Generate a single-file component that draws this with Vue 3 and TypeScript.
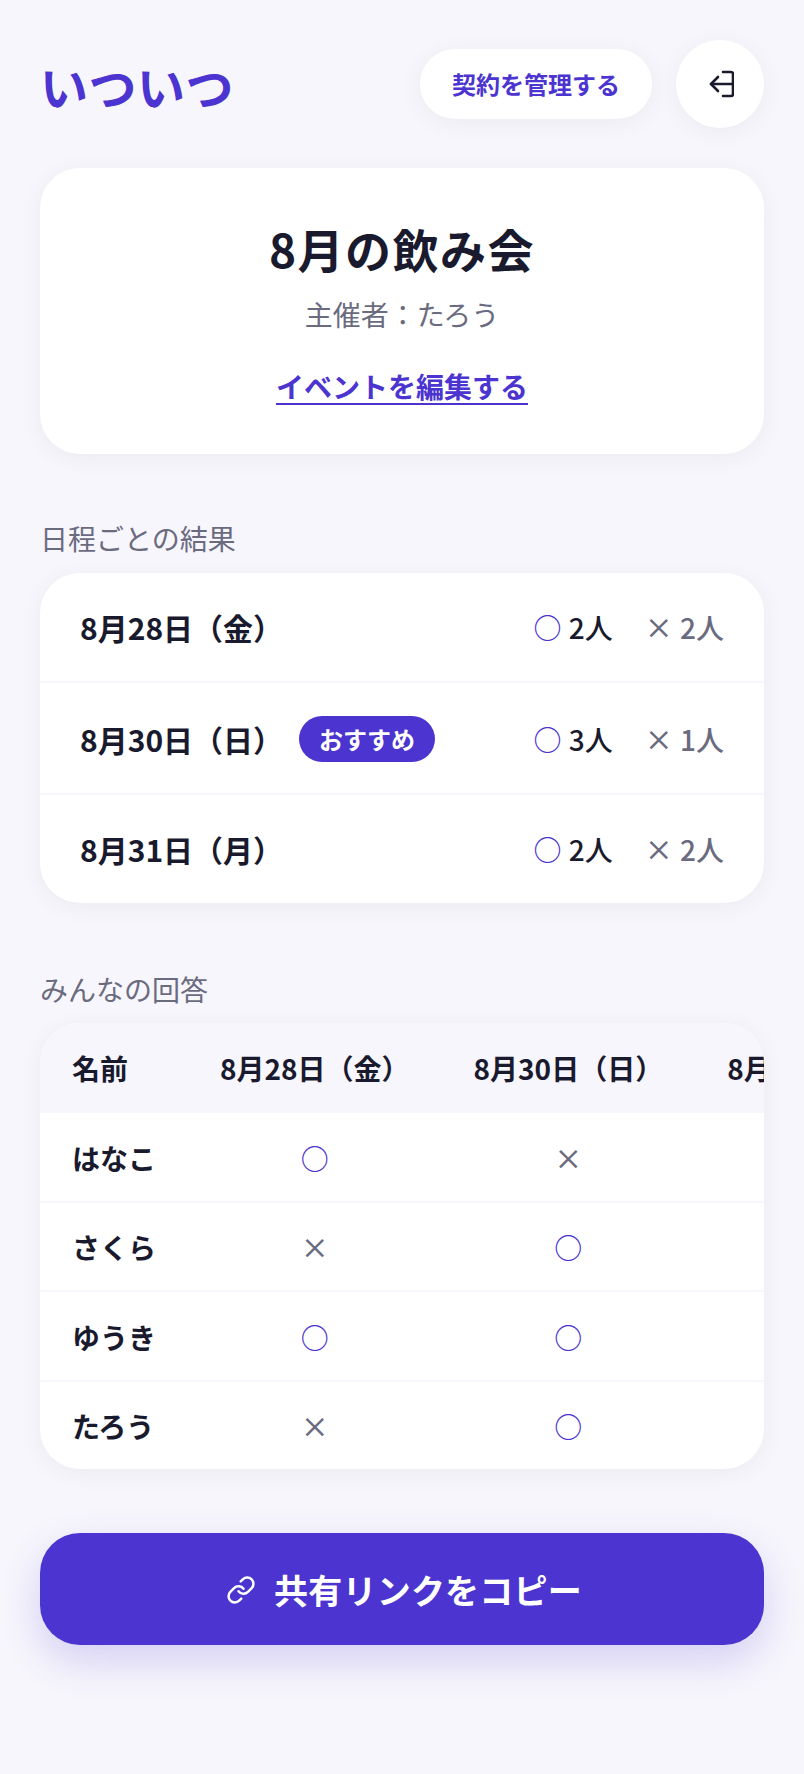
<script setup lang="ts">
type Mark = 'yes' | 'no'

interface DateSummary {
  label: string
  yes: number
  no: number
  recommended?: boolean
}

interface Answer {
  name: string
  marks: Mark[]
}

const summaries: DateSummary[] = [
  { label: '8月28日（金）', yes: 2, no: 2 },
  { label: '8月30日（日）', yes: 3, no: 1, recommended: true },
  { label: '8月31日（月）', yes: 2, no: 2 },
]

const answers: Answer[] = [
  { name: 'はなこ', marks: ['yes', 'no', 'yes'] },
  { name: 'さくら', marks: ['no', 'yes', 'no'] },
  { name: 'ゆうき', marks: ['yes', 'yes', 'no'] },
  { name: 'たろう', marks: ['no', 'yes', 'yes'] },
]
</script>

<template>
  <div class="page">
    <header class="top">
      <div class="logo">いついつ</div>
      <div class="top__actions">
        <button class="manage" type="button">契約を管理する</button>
        <button class="logout" type="button" aria-label="ログアウト">
          <svg width="28" height="28" viewBox="0 0 28 28" fill="none" stroke="#1a1a2e" stroke-width="2.6" stroke-linecap="round" stroke-linejoin="round">
            <path d="M17 2h8a2 2 0 0 1 2 2v20a2 2 0 0 1-2 2h-8" />
            <path d="M5 14h22" />
            <path d="M12 7l-7 7 7 7" />
          </svg>
        </button>
      </div>
    </header>

    <section class="card event">
      <h1 class="event__title">8月の飲み会</h1>
      <p class="event__host">主催者：たろう</p>
      <a class="event__edit" href="#">イベントを編集する</a>
    </section>

    <h2 class="label">日程ごとの結果</h2>
    <section class="card summary">
      <div v-for="row in summaries" :key="row.label" class="summary__row">
        <span class="summary__date">{{ row.label }}</span>
        <span v-if="row.recommended" class="badge">おすすめ</span>
        <span class="summary__counts">
          <span class="count"><span class="mark-yes count__mark">○</span> {{ row.yes }}人</span>
          <span class="count count--no"><span class="count__mark">×</span> {{ row.no }}人</span>
        </span>
      </div>
    </section>

    <h2 class="label label--answers">みんなの回答</h2>
    <section class="card answers">
      <table class="answers__table">
        <thead>
          <tr>
            <th class="answers__name">名前</th>
            <th v-for="row in summaries" :key="row.label">{{ row.label }}</th>
          </tr>
        </thead>
        <tbody>
          <tr v-for="answer in answers" :key="answer.name">
            <td class="answers__name">{{ answer.name }}</td>
            <td v-for="(mark, i) in answer.marks" :key="i" :class="mark === 'yes' ? 'mark-yes' : 'mark-no'">
              {{ mark === 'yes' ? '○' : '×' }}
            </td>
          </tr>
        </tbody>
      </table>
    </section>

    <button class="share" type="button">
      <svg width="30" height="30" viewBox="0 0 24 24" fill="none" stroke="#fff" stroke-width="2" stroke-linecap="round" stroke-linejoin="round">
        <path d="M10 13a5 5 0 0 0 7.54.54l3-3a5 5 0 0 0-7.07-7.07l-1.72 1.71" />
        <path d="M14 11a5 5 0 0 0-7.54-.54l-3 3a5 5 0 0 0 7.07 7.07l1.71-1.71" />
      </svg>
      <span>共有リンクをコピー</span>
    </button>
  </div>
</template>

<style>
html,
body {
  background: #f7f6fc;
}
</style>

<style scoped>
.page {
  box-sizing: border-box;
  min-height: 1774px;
  padding: 40px 40px 120px;
  background: #f7f6fc;
  color: #1a1a2e;
  font-family: "Noto Sans CJK JP", "Noto Sans", sans-serif;
  font-size: 28px;
  line-height: 1.6;
}

.top {
  display: flex;
  align-items: center;
  justify-content: space-between;
}

.top__actions {
  display: flex;
  align-items: center;
  gap: 24px;
}

.logo {
  padding-top: 4px;
  color: #4b34d0;
  font-size: 48px;
  font-weight: 700;
  letter-spacing: 0.5px;
  line-height: 1.2;
}

.manage {
  padding: 16px 32px;
  border: 0;
  border-radius: 999px;
  background: #ffffff;
  box-shadow: 0 4px 24px rgba(26, 26, 46, 0.05);
  color: #4b34d0;
  font: inherit;
  font-size: 24px;
  font-weight: 700;
}

.logout {
  display: flex;
  align-items: center;
  justify-content: center;
  width: 88px;
  height: 88px;
  padding: 0;
  border: 0;
  border-radius: 50%;
  background: #ffffff;
  box-shadow: 0 4px 24px rgba(26, 26, 46, 0.05);
}

.card {
  border-radius: 40px;
  background: #ffffff;
  box-shadow: 0 4px 24px rgba(26, 26, 46, 0.05);
}

.event {
  display: flex;
  flex-direction: column;
  align-items: center;
  margin-top: 40px;
  padding: 49px 40px 45px;
}

.event__title {
  margin: 0;
  font-size: 46px;
  font-weight: 700;
  letter-spacing: 1.5px;
  line-height: 62px;
}

.event__host {
  margin: 13px 0 0;
  color: #6b6b80;
  font-size: 28px;
}

.event__edit {
  margin-top: 27px;
  color: #4b34d0;
  font-size: 28px;
  font-weight: 700;
  text-decoration: underline;
  text-decoration-thickness: 2px;
  text-underline-offset: 5px;
}

.label {
  margin: 62px 0 13px;
  color: #6b6b80;
  font-size: 28px;
  font-weight: 400;
  line-height: 1.6;
}

.label--answers {
  margin: 64px 0 11px;
}

.summary__row {
  display: flex;
  align-items: center;
  padding: 30px 40px;
  border-bottom: 2px solid #f7f6fc;
}

.summary__row:nth-child(2) {
  padding: 31px 40px 29px;
}

.summary__row:last-child {
  border-bottom: 0;
}

.summary__date {
  font-size: 30px;
  font-weight: 700;
}

.badge {
  margin: 2px 0 2px 16px;
  padding: 4px 20px;
  border-radius: 999px;
  background: #4b34d0;
  color: #ffffff;
  font-size: 24px;
  font-weight: 700;
  line-height: 38px;
}

.summary__counts {
  display: flex;
  gap: 32px;
  margin-left: auto;
  font-weight: 500;
}

.count__mark {
  margin-right: 1px;
}

.count--no {
  color: #6b6b80;
}

.mark-yes {
  color: #4b34d0;
}

.mark-no {
  color: #6b6b80;
}

.answers {
  overflow: hidden;
}

.answers__table {
  border-collapse: collapse;
  white-space: nowrap;
}

.answers__table th,
.answers__table td {
  padding: 22.5px 32px 20px;
  text-align: center;
  font-size: 28px;
  font-weight: 500;
  line-height: 45px;
}

.answers__table th {
  padding-top: 23px;
  padding-bottom: 22px;
  background: #f7f6fc;
  font-weight: 700;
}

.answers__table tbody tr {
  border-bottom: 2px solid #f7f6fc;
}

.answers__table tbody tr:last-child {
  border-bottom: 0;
}

.answers__table .answers__name {
  text-align: left;
  color: #1a1a2e;
  font-weight: 700;
}

.share {
  display: flex;
  align-items: center;
  justify-content: center;
  gap: 18px;
  width: 100%;
  height: 112px;
  margin-top: 64px;
  padding: 2px 0 0 4px;
  border: 0;
  border-radius: 40px;
  background: #4b34d0;
  box-shadow: 0 16px 40px rgba(75, 52, 208, 0.2);
  color: #ffffff;
  font: inherit;
  font-size: 34px;
  font-weight: 700;
  letter-spacing: 0.2px;
}
</style>
